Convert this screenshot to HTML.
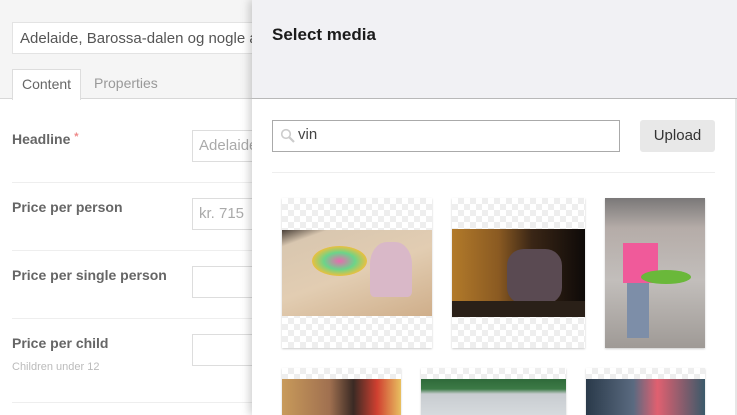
<!DOCTYPE html>
<html style="overflow:hidden;height:415px"><head><meta charset="utf-8"><style>
*{margin:0;padding:0;box-sizing:border-box}
body{width:737px;height:415px;overflow:hidden;position:relative;font-family:"Liberation Sans",sans-serif;background:#fff}
.abs{position:absolute}
.top{left:0;top:0;width:737px;height:99px;background:#f5f5f5;border-bottom:1px solid #d8d8d8}
.name{left:12px;top:22px;width:300px;height:32px;background:#fff;border:1px solid #e3e3e3;font-size:15px;color:#555;padding:7px 7px;white-space:nowrap;overflow:hidden}
.tab{top:69px;height:31px;font-size:14px;padding:6px 9px;color:#999}
.lbl{left:12px;font-size:14px;font-weight:bold;color:#666}
.inp{left:192px;width:80px;height:32px;border:1px solid #ddd;background:#fff;font-size:15px;color:#aaa;padding:6px 6px}
.hr{left:12px;width:260px;height:1px;background:#eee}
.panel{left:252px;top:0;width:485px;height:415px;background:#fff;box-shadow:-3px 0 8px rgba(0,0,0,.18);overflow:hidden}
.ph{left:0;top:0;width:485px;height:99px;background:#f1f1f4;border-bottom:1px solid #b8b8b8}
.chk{background-color:#fff;background-image:linear-gradient(45deg,#eee 25%,transparent 25%,transparent 75%,#eee 75%),linear-gradient(45deg,#eee 25%,transparent 25%,transparent 75%,#eee 75%);background-size:12px 12px;background-position:0 0,6px 6px;box-shadow:0 1px 2px rgba(0,0,0,.2);overflow:hidden}
</style></head><body>
<div class="abs top"></div>
<div class="abs name">Adelaide, Barossa-dalen og nogle af de bedste vine</div>
<div class="abs tab" style="left:12px;background:#fff;border:1px solid #ddd;border-bottom:none;color:#666">Content</div>
<div class="abs tab" style="left:85px">Properties</div>
<div class="abs lbl" style="top:131px">Headline <span style="color:#e88;font-size:11px;vertical-align:top">*</span></div>
<div class="abs inp" style="top:130px">Adelaide</div>
<div class="abs hr" style="top:182px"></div>
<div class="abs lbl" style="top:199px">Price per person</div>
<div class="abs inp" style="top:198px">kr. 715</div>
<div class="abs hr" style="top:250px"></div>
<div class="abs lbl" style="top:267px">Price per single person</div>
<div class="abs inp" style="top:266px"></div>
<div class="abs hr" style="top:318px"></div>
<div class="abs lbl" style="top:335px">Price per child</div>
<div class="abs" style="left:12px;top:361px;font-size:11px;color:#bbb">Children under 12</div>
<div class="abs inp" style="top:334px"></div>
<div class="abs hr" style="top:402px"></div>

<div class="abs panel">
 <div class="abs ph"></div>
 <div class="abs" style="left:20px;top:25px;font-size:17px;font-weight:bold;color:#1b1b1b">Select media</div>
 <div class="abs" style="left:20px;top:120px;width:348px;height:32px;border:1px solid #aaa;background:#fff"></div>
 <svg class="abs" style="left:28px;top:128px" width="16" height="16" viewBox="0 0 16 16"><circle cx="6" cy="6" r="4.3" fill="none" stroke="#ccc" stroke-width="1.6"/><path d="M9 9l5 5" stroke="#ccc" stroke-width="2.2"/></svg>
 <div class="abs" style="left:46px;top:126px;font-size:15px;color:#444">vin</div>
 <div class="abs" style="left:388px;top:120px;width:75px;height:32px;background:#e8e8e8;border-radius:3px;font-size:15px;color:#333;text-align:center;line-height:32px">Upload</div>
 <div class="abs" style="left:20px;top:172px;width:443px;height:1px;background:#eee"></div>
 <div class="abs" style="left:483px;top:99px;width:2px;height:316px;background:#e6e6e6"></div>

 <div class="abs chk" style="left:30px;top:198px;width:150px;height:150px"><div class="abs" style="left:0;top:32px;width:150px;height:86px;background:linear-gradient(160deg,#4a4038 0,#d9c7b0 12%,#e2cdb2 50%,#cfae8a 100%)"><div class="abs" style="left:30px;top:16px;width:55px;height:30px;border-radius:50%;background:radial-gradient(#e86ab0,#6bd48a 40%,#e8c040 70%,transparent 72%)"></div><div class="abs" style="left:88px;top:12px;width:42px;height:55px;border-radius:40% 40% 10% 10%;background:#d9b8c8"></div></div></div>
 <div class="abs chk" style="left:200px;top:198px;width:133px;height:150px"><div class="abs" style="left:0;top:31px;width:133px;height:88px;background:linear-gradient(90deg,#b27a2a 0,#8a5a22 35%,#3a2616 60%,#0e0a08 100%)"><div class="abs" style="left:55px;top:20px;width:55px;height:55px;border-radius:30%;background:#5a4a52"></div><div class="abs" style="left:0;top:72px;width:133px;height:16px;background:#2a2018"></div></div></div>
 <div class="abs" style="left:353px;top:198px;width:100px;height:150px;overflow:hidden;background:linear-gradient(180deg,#7a7878 0,#b5aca8 20%,#c2bebb 55%,#9f9a96 100%);box-shadow:0 1px 2px rgba(0,0,0,.2)"><div class="abs" style="left:18px;top:45px;width:35px;height:40px;background:#f05a9a"></div><div class="abs" style="left:36px;top:72px;width:50px;height:14px;border-radius:50%;background:#6ab83a"></div><div class="abs" style="left:22px;top:85px;width:22px;height:55px;background:#7d8ea8"></div></div>

 <div class="abs chk" style="left:30px;top:368px;width:119px;height:60px"><div class="abs" style="left:0;top:11px;width:119px;height:50px;background:linear-gradient(90deg,#c89a5a,#a07050 40%,#3a2a24 60%,#d04030 80%,#e8c060)"></div></div>
 <div class="abs chk" style="left:169px;top:368px;width:145px;height:60px"><div class="abs" style="left:0;top:11px;width:145px;height:50px;background:linear-gradient(180deg,#2f6a3a 0,#3c7a46 20%,#c8ccd0 30%,#dfe3e6 100%)"></div></div>
 <div class="abs chk" style="left:334px;top:368px;width:119px;height:60px"><div class="abs" style="left:0;top:11px;width:119px;height:50px;background:linear-gradient(90deg,#2a3a4a,#5a6a80 40%,#e06070 60%,#3a5a6a)"></div></div>
</div>
</body></html>
